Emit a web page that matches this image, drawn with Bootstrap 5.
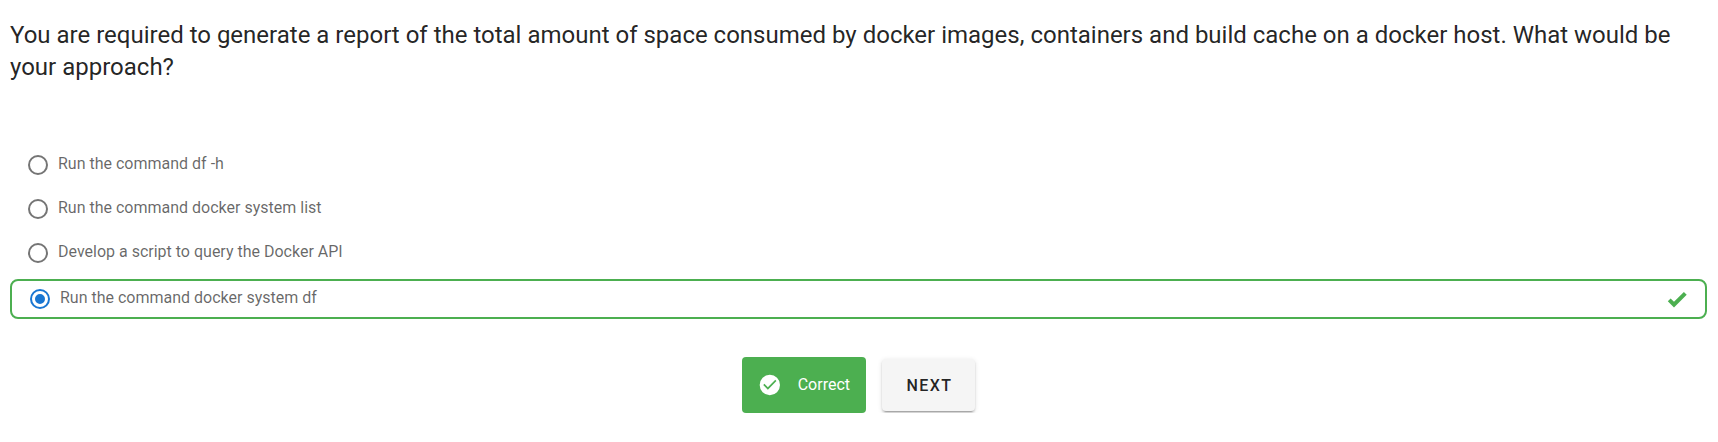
<!DOCTYPE html>
<html lang="en">
<head>
<meta charset="utf-8">
<meta name="viewport" content="width=device-width, initial-scale=1">
<title>Docker quiz</title>
<link href="https://cdn.jsdelivr.net/npm/bootstrap@5.3.0/dist/css/bootstrap.min.css" rel="stylesheet">
<style>
body{font-family:Roboto,sans-serif;color:rgba(0,0,0,.87);background:#fff}
.quiz{padding:19px 11px 0 10px}
.question{font-size:24px;line-height:32px;font-weight:400}
.options{margin-top:59px}
.option{height:44px;padding:2px 0 0 16px;gap:8px;font-size:16px;line-height:24px;color:rgba(0,0,0,.6)}
.option span{padding-bottom:2px}
.option svg{width:24px;height:24px;fill:#757575}
.option.chosen{height:40px;margin-top:5px;padding-top:0;border:2px solid #4caf50;border-radius:8px}
.option.chosen svg{fill:#1976d2}
.option.chosen svg.tick{fill:#4caf50;margin-right:16px}
.actions{margin-top:38px}
.result{width:124px;height:56px;background:#4caf50;color:#fff;border-radius:4px;font-size:16px}
.next{width:93px;height:52px;padding:2px 0 0 2px;color:rgba(0,0,0,.87);border-radius:4px;background:#f5f5f5;font-size:16px;font-weight:500;letter-spacing:1.43px;box-shadow:0 3px 1px -2px rgba(0,0,0,.2),0 2px 2px rgba(0,0,0,.14),0 1px 5px rgba(0,0,0,.12)}
</style>
</head>
<body>
<main class="quiz">
<h1 class="question mb-0">You are required to generate a report of the total amount of space consumed by docker images, containers and build cache on a docker host. What would be your approach?</h1>
<div class="options">
<label class="option d-flex align-items-center"><svg viewBox="0 0 24 24"><path d="M12 20a8 8 0 1 1 0-16 8 8 0 0 1 0 16m0-18a10 10 0 1 0 0 20 10 10 0 0 0 0-20z"/></svg><span>Run the command df -h</span></label>
<label class="option d-flex align-items-center"><svg viewBox="0 0 24 24"><path d="M12 20a8 8 0 1 1 0-16 8 8 0 0 1 0 16m0-18a10 10 0 1 0 0 20 10 10 0 0 0 0-20z"/></svg><span>Run the command docker system list</span></label>
<label class="option d-flex align-items-center"><svg viewBox="0 0 24 24"><path d="M12 20a8 8 0 1 1 0-16 8 8 0 0 1 0 16m0-18a10 10 0 1 0 0 20 10 10 0 0 0 0-20z"/></svg><span>Develop a script to query the Docker API</span></label>
<label class="option chosen d-flex align-items-center"><svg viewBox="0 0 24 24"><path d="M12 20a8 8 0 1 1 0-16 8 8 0 0 1 0 16m0-18a10 10 0 1 0 0 20 10 10 0 0 0 0-20m0 5a5 5 0 1 0 0 10 5 5 0 0 0 0-10z"/></svg><span class="flex-grow-1">Run the command docker system df</span><svg class="tick" viewBox="0 0 24 24"><path d="M9 20.42 2.79 14.21 5.62 11.38 9 14.77 18.88 4.88 21.71 7.71z"/></svg></label>
</div>
<div class="actions d-flex justify-content-center align-items-center gap-3">
<div class="result d-flex align-items-center px-3"><svg width="24" height="24" viewBox="0 0 24 24" fill="#fff"><path d="M12 1.7a10.3 10.3 0 1 0 0 20.6 10.3 10.3 0 0 0 0-20.6m-2 15-4.7-4.7 1.2-1.2 3.5 3.5 7.5-7.5 1.2 1.2z"/></svg><span class="ms-3">Correct</span></div>
<button class="next border-0">NEXT</button>
</div>
</main>
<script src="https://cdn.jsdelivr.net/npm/bootstrap@5.3.0/dist/js/bootstrap.bundle.min.js"></script>
</body>
</html>
